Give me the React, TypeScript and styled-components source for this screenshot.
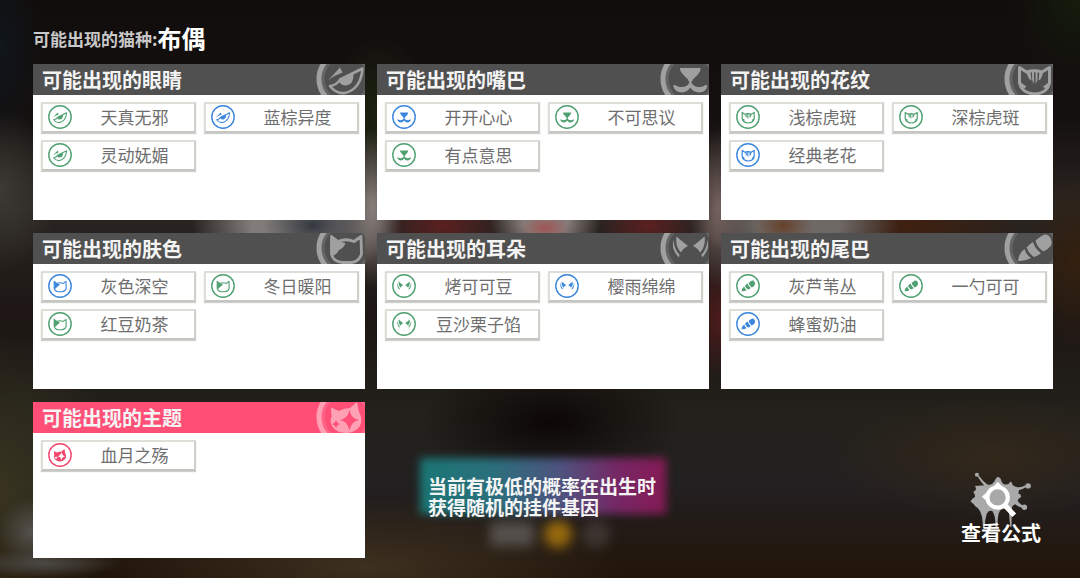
import React from "react";
import styled, { createGlobalStyle } from "styled-components";

const GlobalStyle = createGlobalStyle`
  *, *::before, *::after { box-sizing: border-box; }
  body {
    margin: 0;
    background: #1a1614;
    font-family: "Noto Sans CJK SC", "Noto Sans", sans-serif;
  }
`;

type Kind = "eye" | "mouth" | "pattern" | "skin" | "ear" | "tail" | "theme";
type Tone = "green" | "blue" | "pink";

const tones: Record<Tone, string> = {
  green: "#4fa070",
  blue: "#3b86dc",
  pink: "#f0476b",
};

interface Gene {
  name: string;
  tone: Tone;
}

interface GeneGroup {
  kind: Kind;
  title: string;
  genes: Gene[];
}

const groups: GeneGroup[] = [
  {
    kind: "eye",
    title: "可能出现的眼睛",
    genes: [
      { name: "天真无邪", tone: "green" },
      { name: "蓝棕异度", tone: "blue" },
      { name: "灵动妩媚", tone: "green" },
    ],
  },
  {
    kind: "mouth",
    title: "可能出现的嘴巴",
    genes: [
      { name: "开开心心", tone: "blue" },
      { name: "不可思议", tone: "green" },
      { name: "有点意思", tone: "green" },
    ],
  },
  {
    kind: "pattern",
    title: "可能出现的花纹",
    genes: [
      { name: "浅棕虎斑", tone: "green" },
      { name: "深棕虎斑", tone: "green" },
      { name: "经典老花", tone: "blue" },
    ],
  },
  {
    kind: "skin",
    title: "可能出现的肤色",
    genes: [
      { name: "灰色深空", tone: "blue" },
      { name: "冬日暖阳", tone: "green" },
      { name: "红豆奶茶", tone: "green" },
    ],
  },
  {
    kind: "ear",
    title: "可能出现的耳朵",
    genes: [
      { name: "烤可可豆", tone: "green" },
      { name: "樱雨绵绵", tone: "blue" },
      { name: "豆沙栗子馅", tone: "green" },
    ],
  },
  {
    kind: "tail",
    title: "可能出现的尾巴",
    genes: [
      { name: "灰芦苇丛", tone: "green" },
      { name: "一勺可可", tone: "green" },
      { name: "蜂蜜奶油", tone: "blue" },
    ],
  },
  {
    kind: "theme",
    title: "可能出现的主题",
    genes: [{ name: "血月之殇", tone: "pink" }],
  },
];

const Page = styled.main`
  position: relative;
  min-height: 100vh;
  padding: 25px 27px 20px 33px;
  overflow: hidden;
  isolation: isolate;
`;

const Backdrop = styled.div`
  position: absolute;
  inset: 0;
  z-index: -1;
  background:
    radial-gradient(34px 34px at 3% 92%, #55524e, transparent),
    radial-gradient(80px 14px at 4% 97.5%, #4a4844, transparent),
    radial-gradient(50px 30px at 29% 39%, #343840, transparent),
    radial-gradient(100px 60px at 27% 39%, #817c79 40%, transparent),
    radial-gradient(30px 80px at 34.5% 36%, #8a807b, transparent),
    radial-gradient(60px 36px at 41% 39%, #5c2020, transparent),
    radial-gradient(24px 14px at 50.5% 39.5%, #a05656, transparent),
    radial-gradient(56px 44px at 50.5% 38%, #857b78 40%, transparent),
    radial-gradient(50px 30px at 60% 39%, #5c2020, transparent),
    radial-gradient(30px 80px at 66.5% 36%, #75625f, transparent),
    radial-gradient(26px 60px at 66.5% 55%, #4d1c1c, transparent),
    radial-gradient(30px 20px at 72.5% 39%, #66422c, transparent),
    radial-gradient(100px 40px at 74% 39%, #6f6966 40%, transparent),
    radial-gradient(120px 36px at 84% 39%, #40200f, transparent),
    radial-gradient(60px 80px at 0% 33%, #3c3a34, transparent),
    radial-gradient(40px 100px at 0% 8%, #10161c, transparent),
    radial-gradient(50px 80px at 35% 20%, #1c2410, transparent),
    radial-gradient(70px 80px at 100% 0%, #141c0c, transparent),
    radial-gradient(50px 90px at 99.5% 45%, #33200f, transparent),
    radial-gradient(170px 60px at 92% 79%, #33281a, transparent),
    radial-gradient(130px 60px at 51% 73%, #0c0706, transparent),
    radial-gradient(260px 70px at 34% 98%, #3c3020, transparent),
    radial-gradient(120px 160px at 0% 85%, #38341f, transparent),
    linear-gradient(#110d0c 0%, #14100f 20%, #2a2522 36%, #1d1614 55%, #22211b 72%, #232021 84%, #221b17 91%, #23170d 97%, #211409 100%);
`;

const BlurredStatus = styled.div`
  position: absolute;
  left: 50%;
  bottom: 30px;
  display: flex;
  gap: 10px;
  align-items: center;
  margin-left: -50px;
  filter: blur(6px);
`;

const Smudge = styled.span<{ $color: string; $wide?: boolean }>`
  width: ${(p) => (p.$wide ? 44 : 28)}px;
  height: ${(p) => (p.$wide ? 24 : 28)}px;
  border-radius: ${(p) => (p.$wide ? 4 : 14)}px;
  background: ${(p) => p.$color};
`;

const Heading = styled.h1`
  display: flex;
  align-items: center;
  margin: 0 0 12px;
  height: 27px;
  font-size: 17px;
  line-height: 27px;
  font-weight: 700;
  color: #c8c8c8;
`;

const Breed = styled.strong`
  font-size: 24px;
  line-height: 27px;
  font-weight: 700;
  color: #fff;
  padding-bottom: 3px;
`;

const Grid = styled.div`
  display: grid;
  grid-template-columns: repeat(3, minmax(0, 1fr));
  gap: 13px 12px;
`;

const Panel = styled.section`
  min-height: 156px;
  background: #fff;
`;

const PanelHeader = styled.header<{ $accent: boolean }>`
  position: relative;
  height: 31px;
  padding-left: 9px;
  overflow: hidden;
  background: ${(p) => (p.$accent ? "#ff4f77" : "#505050")};
`;

const PanelTitle = styled.h2`
  margin: 0;
  font-size: 20px;
  line-height: 31px;
  font-weight: 700;
  color: #f4f4f4;
`;

const HeaderBadge = styled.svg`
  position: absolute;
  top: -15px;
  right: -11px;
  width: 60px;
  height: 60px;
  color: #fff;
  opacity: 0.46;
`;

const GeneList = styled.ul`
  display: grid;
  grid-template-columns: repeat(2, minmax(0, 1fr));
  gap: 7px 8px;
  margin: 0;
  padding: 7px 6px 8px 8px;
  list-style: none;
`;

const GeneButton = styled.button`
  display: flex;
  align-items: center;
  width: 100%;
  height: 31px;
  padding: 0 0 2px 5px;
  border: 2px solid #deded9;
  border-right-color: #d0d0cb;
  border-bottom-color: #c6c6c1;
  background: #fff;
  box-shadow: 0 1px 1px #cfcfcf;
  font-family: inherit;
  font-size: 17px;
  line-height: 24px;
  color: #6e6e6e;
  cursor: pointer;
`;

const GeneIcon = styled.svg<{ $tone: Tone }>`
  flex: none;
  width: 24px;
  height: 24px;
  color: ${(p) => tones[p.$tone]};
`;

const GeneName = styled.span`
  flex: 1;
  padding-left: 3px;
  text-align: center;
`;

const NoteCell = styled.div`
  display: flex;
  align-items: flex-end;
  justify-content: center;
  padding-bottom: 41px;
`;

const Note = styled.p`
  position: relative;
  width: 246px;
  margin: 0;
  padding: 17px 8px 0;
  font-size: 19px;
  line-height: 21px;
  font-weight: 700;
  color: #f4f4f4;

  &::before {
    content: "";
    position: absolute;
    inset: 0 0 3px;
    z-index: -1;
    background: linear-gradient(90deg, #1b7674, #2b6f7c 30%, #50527f 58%, #762765 80%, #861a55);
    filter: blur(4px);
  }
`;

const ActionCell = styled.div`
  display: flex;
  align-items: flex-end;
  justify-content: flex-end;
  padding: 0 12px 14px 0;
`;

const FormulaButton = styled.button`
  display: flex;
  flex-direction: column;
  align-items: center;
  padding: 0;
  border: 0;
  background: none;
  font-family: inherit;
  font-size: 20px;
  line-height: 22px;
  font-weight: 700;
  color: #fff;
  cursor: pointer;
`;

const SplatIcon = styled.svg`
  width: 62px;
  height: 58px;
  margin-bottom: -8px;
`;

const FormulaLabel = styled.span`
  position: relative;
`;

function Glyph({ kind }: { kind: Kind }) {
  switch (kind) {
    case "eye":
      return (
        <>
          <path fill="currentColor" d="M12.500 31 L24 18.500 L26.500 23.500 Q19 26 12.500 31Z" />
          <path
            fill="none"
            stroke="currentColor"
            strokeWidth="2.600"
            strokeLinejoin="round"
            d="M14 37 Q20 45 29 44 Q45 40 46.500 19.500 L24 30.500 Q21 36 14 37Z"
          />
          <path fill="currentColor" d="M22.500 31 L37.500 24 Q38 35.500 30.500 36.500 Q24 36.500 22.500 31Z" />
        </>
      );
    case "mouth":
      return (
        <path
          fill="currentColor"
          d="M20 19 H40.500 Q41 22 37 26.500 Q32.500 30 31.200 33.500 Q34 38 39 38 Q43.500 38 45 36 L47.500 36.500 Q46 43.500 39 43.500 Q33 43 30.300 38.500 Q27.500 43 22 43.500 Q15 43.500 13 36.500 L15.500 36 Q17 38 22 38 Q27 38 29.500 33.500 Q28.500 30 24 26.500 Q19.500 22 20 19Z"
        />
      );
    case "pattern":
      return (
        <>
          <path
            fill="none"
            stroke="currentColor"
            strokeWidth="3"
            strokeLinejoin="round"
            d="M15.500 18.500 L22.500 23 Q30 20.500 38 23 L45.500 18.500 L45.500 34 Q43 44.500 31 45 Q18 44.500 15.500 34Z"
          />
          <path
            fill="currentColor"
            d="M22.500 23 H26.500 L27.500 31.500 Q24 30 22.500 23Z M28 22 H30 V35 L28.200 31Z M31.600 22 H33.600 L33.400 31 L31.600 35Z M35.500 23 H39 Q38 30 34.500 31.500Z M16 33 L22.500 37.500 L18.500 41Z M45.500 33 L39 37.500 L43 41Z"
          />
        </>
      );
    case "skin":
      return (
        <>
          <path
            fill="none"
            stroke="currentColor"
            strokeWidth="2.800"
            strokeLinejoin="round"
            d="M15.500 18.500 L22 23.500 Q30 20 38 23.500 L45 18.500 L45.500 36 Q43 44 35 44.500 H27 Q17 44 15.500 36Z"
          />
          <path fill="currentColor" d="M15.500 19 L22 23.500 L29.500 25 Q28 30 23 32 Q20.500 37 16 38Z" />
        </>
      );
    case "ear":
      return (
        <path
          fill="currentColor"
          d="M16.500 18.500 Q21.500 23 28 28 Q23 30 21 34.500 Q15 28 16.500 18.500Z M13.500 22 Q14 31 19.500 36.500 L19 39.500 Q11 32 13.500 22Z M44.500 18.500 Q39.500 23 33 28 Q38 30 40 34.500 Q46 28 44.500 18.500Z M47.500 22 Q47 31 41.500 36.500 L42 39.500 Q50 32 47.500 22Z"
        />
      );
    case "tail":
      return (
        <path
          fill="currentColor"
          d="M14 43 Q14.500 35.500 20.500 31 Q22 36.500 27 40 Q21 43.500 14 43Z M22.500 29.500 Q25.500 26 29 24 Q31 31 37 35 Q34 38 30 39 Q24.500 35.500 22.500 29.500Z M31.500 22.500 Q36 18.500 40.500 16.500 Q44.500 16 46.500 20 Q48.500 24 47 27.500 Q44 31.500 39.500 33.500 Q33 29.500 31.500 22.500Z"
        />
      );
    case "theme":
      return (
        <path
          fill="currentColor"
          fillRule="evenodd"
          d="M15 20.500 L23 24 Q28 21 34 21 L41 15 L43 25 Q47 32 44 39 Q39 46 30 46 Q20 46 16 39 Q13.500 34 15.500 30Z M33.500 22.500 Q34.800 31.500 43 33 Q34.800 34.500 33.500 43.500 Q32 34.500 24 33 Q32 31.500 33.500 22.500Z M20 32.500 Q20.600 36.500 24.500 37 Q20.600 37.700 20 41.500 Q19.400 37.700 15.500 37 Q19.400 36.500 20 32.500Z"
        />
      );
  }
}

function Badge({ kind, bold = false }: { kind: Kind; bold?: boolean }) {
  return (
    <>
      <circle
        cx="30"
        cy="30"
        r={bold ? 27 : 28}
        fill="none"
        stroke="currentColor"
        strokeWidth={bold ? 5 : 3.5}
      />
      {bold && (
        <circle cx="30" cy="30" r="23" fill="none" stroke="currentColor" strokeWidth="3" opacity="0.25" />
      )}
      <Glyph kind={kind} />
    </>
  );
}

function GenePanel({ group }: { group: GeneGroup }) {
  return (
    <Panel>
      <PanelHeader $accent={group.kind === "theme"}>
        <PanelTitle>{group.title}</PanelTitle>
        <HeaderBadge viewBox="0 0 60 60" aria-hidden="true">
          <Badge kind={group.kind} bold />
        </HeaderBadge>
      </PanelHeader>
      <GeneList>
        {group.genes.map((gene) => (
          <li key={gene.name}>
            <GeneButton type="button">
              <GeneIcon $tone={gene.tone} viewBox="0 0 60 60" aria-hidden="true">
                <Badge kind={group.kind} />
              </GeneIcon>
              <GeneName>{gene.name}</GeneName>
            </GeneButton>
          </li>
        ))}
      </GeneList>
    </Panel>
  );
}

function Splat() {
  return (
    <SplatIcon viewBox="93 25 182 171" aria-hidden="true">
      <g fill="#a9a9a9">
        <path d="M107 66 Q122 64 134 65 Q124 52 115 38 L119 36 Q130 52 144 62 Q154 64 160 58 Q166 52 169 44 Q176 35 183 45 Q186 58 193 61 Q202 64 208 59 L211 54 Q218 54 217 61 Q220 67 230 69 Q242 72 256 64 L258 69 Q246 77 236 79 Q238 84 234 88 Q246 92 243 99 Q234 104 233 110 Q240 122 254 125 L253 131 Q236 130 226 120 Q218 122 216 130 L215 185 Q213 191 211 185 L207 140 Q194 128 182 138 Q173 150 174 188 Q171 195 168 188 Q168 150 158 140 Q147 137 142 148 Q136 166 136 188 Q133 193 130 188 Q132 160 123 142 Q116 130 109 127 Q103 118 94 112 Q98 104 107 99 Q109 91 102 84 L109 79 Q112 72 107 66Z" />
        <circle cx="113" cy="33" r="6" />
        <circle cx="264" cy="66" r="8" />
        <circle cx="253" cy="129" r="8" />
      </g>
      <circle cx="174" cy="100" r="30" fill="none" stroke="#fff" strokeWidth="12" />
      <path d="M174 54 L190 70 L158 74Z M127 98 L146 82 L146 114Z" fill="#fff" />
      <path d="M199 127 L218 147" stroke="#fff" strokeWidth="15" strokeLinecap="square" />
    </SplatIcon>
  );
}

export default function App() {
  return (
    <>
      <GlobalStyle />
      <Page>
        <Backdrop>
          <BlurredStatus>
            <Smudge $color="#55504c" $wide />
            <Smudge $color="#96690f" />
            <Smudge $color="#3c3530" />
          </BlurredStatus>
        </Backdrop>
        <Heading>
          可能出现的猫种:<Breed>布偶</Breed>
        </Heading>
        <Grid>
          {groups.map((group) => (
            <GenePanel key={group.kind} group={group} />
          ))}
          <NoteCell>
            <Note>当前有极低的概率在出生时获得随机的挂件基因</Note>
          </NoteCell>
          <ActionCell>
            <FormulaButton type="button">
              <Splat />
              <FormulaLabel>查看公式</FormulaLabel>
            </FormulaButton>
          </ActionCell>
        </Grid>
      </Page>
    </>
  );
}
